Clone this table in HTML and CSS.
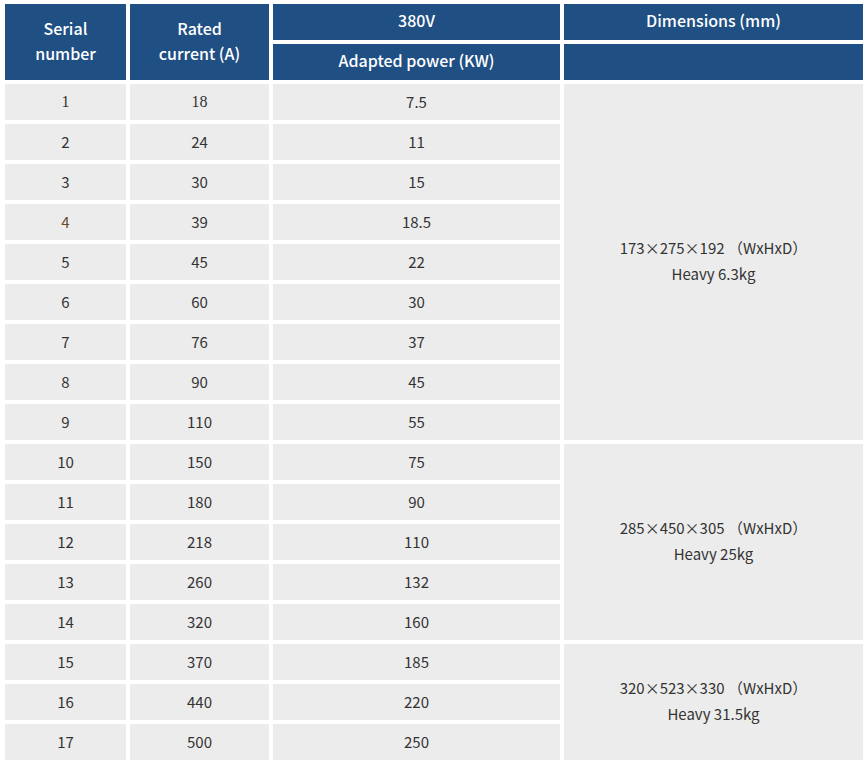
FILE: index.html
```html
<!DOCTYPE html>
<html>
<head>
<meta charset="utf-8">
<link rel="stylesheet" href="styles.css">
</head>
<body>
<table class="spec">
  <colgroup>
    <col class="c1"><col class="c2"><col class="c3"><col class="c4">
  </colgroup>
  <thead>
    <tr>
      <th rowspan="2" class="two">Serial<br>number</th>
      <th rowspan="2" class="two">Rated<br>current (A)</th>
      <th>380V</th>
      <th>Dimensions (mm)</th>
    </tr>
    <tr>
      <th>Adapted power (KW)</th>
      <th></th>
    </tr>
  </thead>
  <tbody>
    <tr><td class="alt">1</td><td class="alt">18</td><td>7.5</td><td rowspan="9" class="dim">173×275×192 （WxHxD）<br>Heavy 6.3kg</td></tr>
    <tr><td>2</td><td>24</td><td>11</td></tr>
    <tr><td>3</td><td>30</td><td>15</td></tr>
    <tr><td class="brown">4</td><td>39</td><td>18.5</td></tr>
    <tr><td>5</td><td>45</td><td>22</td></tr>
    <tr><td>6</td><td>60</td><td>30</td></tr>
    <tr><td>7</td><td>76</td><td>37</td></tr>
    <tr><td>8</td><td>90</td><td>45</td></tr>
    <tr><td>9</td><td>110</td><td>55</td></tr>
    <tr><td>10</td><td>150</td><td>75</td><td rowspan="5" class="dim">285×450×305 （WxHxD）<br>Heavy 25kg</td></tr>
    <tr><td>11</td><td>180</td><td>90</td></tr>
    <tr><td>12</td><td>218</td><td>110</td></tr>
    <tr><td>13</td><td>260</td><td>132</td></tr>
    <tr><td>14</td><td>320</td><td>160</td></tr>
    <tr><td>15</td><td>370</td><td>185</td><td rowspan="3" class="dim">320×523×330 （WxHxD）<br>Heavy 31.5kg</td></tr>
    <tr><td>16</td><td>440</td><td>220</td></tr>
    <tr><td>17</td><td>500</td><td>250</td></tr>
  </tbody>
</table>
</body>
</html>
```

FILE: styles.css
```css
html, body {
  margin: 0;
  padding: 0;
  background: #ffffff;
}
.spec {
  margin-left: 1px;
  border-collapse: separate;
  border-spacing: 4px;
  table-layout: fixed;
  width: 866px;
  font-family: "Noto Sans CJK SC", "Noto Sans", sans-serif;
}
.c1 { width: 121px; }
.c2 { width: 139px; }
.c3 { width: 287px; }
.c4 { width: 299px; }
.spec th {
  background: #1f4f83;
  color: #ffffff;
  font-weight: 500;
  font-size: 16px;
  line-height: 24px;
  height: 36px;
  padding: 0 0 4px 0;
  text-align: center;
  vertical-align: middle;
  box-sizing: border-box;
}
.spec th.two {
  line-height: 25px;
  padding-bottom: 2px;
}
.spec td {
  background: #ececec;
  color: #333333;
  font-size: 15px;
  line-height: 20px;
  height: 36px;
  padding: 0 0 1px 0;
  text-align: center;
  vertical-align: middle;
  box-sizing: border-box;
}
.spec td.alt {
  font-family: "Liberation Serif", "Noto Sans CJK SC", serif;
  font-size: 16px;
}
.spec td.brown {
  color: #6b4a2a;
}
.spec td.dim {
  line-height: 26px;
  padding-bottom: 3px;
}
```
